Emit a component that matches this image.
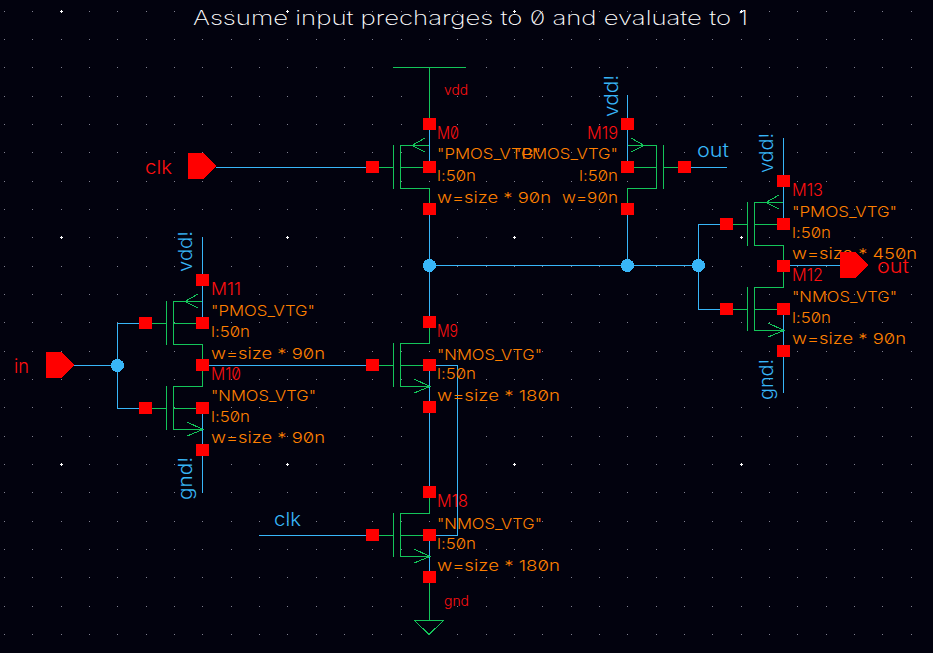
const BLUE = "#38b6f8";
const GREEN = "#14c45a";
const RED = "#ff0000";

type LabelProps = {
  x: number;
  y: number;
  w: number;
  text: string;
  className: string;
};

const PROP = "fill-[#ff8000] text-[15px]";
const INST = "fill-[#ff1010] text-[17px]";
const PIN_RED = "fill-[#ff1010] text-[19px]";
const NET_BLUE = "fill-[#38b6f8] text-[19px]";
const NET_RED = "fill-[#ff1010] text-[14px]";

function Label({ x, y, w, text, className }: LabelProps) {
  return (
    <text x={x} y={y} textLength={w} lengthAdjust="spacingAndGlyphs" className={className}>
      {text}
    </text>
  );
}

// rotated net labels read bottom to top
function Vertical({ x, y, w, text }: { x: number; y: number; w: number; text: string }) {
  return (
    <text
      transform={`translate(${x} ${y}) rotate(-90)`}
      textLength={w}
      lengthAdjust="spacingAndGlyphs"
      className="fill-[#38b6f8] text-[19px]"
    >
      {text}
    </text>
  );
}

function Wire({ d, color = BLUE }: { d: string; color?: string }) {
  return <path d={d} fill="none" stroke={color} strokeWidth={1} />;
}

function Pad({ x, y }: { x: number; y: number }) {
  return <rect x={x - 6} y={y - 6} width={13} height={12} fill={RED} />;
}

function Junction({ x, y }: { x: number; y: number }) {
  return <circle cx={x + 0.5} cy={y + 0.5} r={6.5} fill={BLUE} />;
}

// gate pin, tip points to the right
function Pin({ x, y }: { x: number; y: number }) {
  return (
    <polygon
      points={`${x},${y - 13} ${x + 15},${y - 13} ${x + 28},${y} ${x + 15},${y + 13} ${x},${y + 13}`}
      fill={RED}
    />
  );
}

type MosProps = { sx: number; my: number; kind: "p" | "n"; dir?: number };

function MosWires({ sx, my, kind, dir = -1 }: MosProps) {
  const cx = sx + 29 * dir;
  const gx = sx + 36 * dir;
  const top = my - 22;
  const bot = my + 21;
  return (
    <g>
      <Wire color={GREEN} d={`M${gx + 0.5} ${top}V${bot + 1}M${cx + 0.5} ${top}V${bot + 1}`} />
      <Wire color={GREEN} d={`M${sx + 51 * dir} ${my + 0.5}H${gx}M${cx} ${my + 0.5}H${sx}`} />
      <Wire color={GREEN} d={`M${cx} ${top + 0.5}H${sx + 1}M${cx} ${bot + 0.5}H${sx + 1}`} />
      {kind === "p" ? (
        <>
          <Wire d={`M${sx + 0.5} ${my - 43}V${my}`} />
          <Wire color={GREEN} d={`M${sx + 0.5} ${bot}V${my + 37}`} />
          <Wire
            color={GREEN}
            d={`M${sx + 4 * dir} ${top - 7}L${sx + 17 * dir} ${top + 0.5}L${sx + 4 * dir} ${top + 7}`}
          />
        </>
      ) : (
        <>
          <Wire color={GREEN} d={`M${sx + 0.5} ${my - 37}V${top}`} />
          <Wire d={`M${sx + 0.5} ${my}V${my + 43}`} />
          <Wire
            color={GREEN}
            d={`M${sx + 15 * dir} ${bot - 7}L${sx + 1} ${bot + 0.5}L${sx + 15 * dir} ${bot + 7}`}
          />
        </>
      )}
    </g>
  );
}

function MosPads({ sx, my, dir = -1 }: { sx: number; my: number; dir?: number }) {
  return (
    <g>
      <Pad x={sx} y={my - 43} />
      <Pad x={sx} y={my} />
      <Pad x={sx} y={my + 42} />
      <Pad x={sx + 57 * dir} y={my} />
    </g>
  );
}

const devices: MosProps[] = [
  { sx: 429, my: 167, kind: "p" },
  { sx: 627, my: 167, kind: "p", dir: 1 },
  { sx: 429, my: 365, kind: "n" },
  { sx: 429, my: 535, kind: "n" },
  { sx: 202, my: 323, kind: "p" },
  { sx: 202, my: 408, kind: "n" },
  { sx: 783, my: 224, kind: "p" },
  { sx: 783, my: 309, kind: "n" },
];

const labels: LabelProps[] = [
  { x: 444, y: 95, w: 24, text: "vdd", className: NET_RED },
  { x: 444, y: 606, w: 25, text: "gnd", className: NET_RED },
  { x: 14, y: 373, w: 15, text: "in", className: PIN_RED },
  { x: 145, y: 174, w: 27, text: "clk", className: PIN_RED },
  { x: 274, y: 526, w: 27, text: "clk", className: NET_BLUE },
  { x: 697, y: 157, w: 32, text: "out", className: NET_BLUE },
  { x: 877, y: 273, w: 32, text: "out", className: PIN_RED },

  { x: 437, y: 139, w: 22, text: "M0", className: INST },
  { x: 437, y: 159, w: 104, text: '"PMOS_VTG"', className: PROP },
  { x: 437, y: 181, w: 39, text: "l:50n", className: PROP },
  { x: 437, y: 203, w: 114, text: "w=size * 90n", className: PROP },

  { x: 587, y: 139, w: 31, text: "M19", className: INST },
  { x: 514, y: 159, w: 104, text: '"PMOS_VTG"', className: PROP },
  { x: 579, y: 181, w: 39, text: "l:50n", className: PROP },
  { x: 562, y: 203, w: 56, text: "w=90n", className: PROP },

  { x: 437, y: 337, w: 21, text: "M9", className: INST },
  { x: 437, y: 360, w: 105, text: '"NMOS_VTG"', className: PROP },
  { x: 437, y: 379, w: 39, text: "l:50n", className: PROP },
  { x: 437, y: 401, w: 123, text: "w=size * 180n", className: PROP },

  { x: 437, y: 507, w: 31, text: "M18", className: INST },
  { x: 437, y: 529, w: 105, text: '"NMOS_VTG"', className: PROP },
  { x: 437, y: 549, w: 39, text: "l:50n", className: PROP },
  { x: 437, y: 571, w: 123, text: "w=size * 180n", className: PROP },

  { x: 211, y: 295, w: 30, text: "M11", className: INST },
  { x: 211, y: 316, w: 104, text: '"PMOS_VTG"', className: PROP },
  { x: 211, y: 337, w: 39, text: "l:50n", className: PROP },
  { x: 211, y: 359, w: 114, text: "w=size * 90n", className: PROP },

  { x: 211, y: 380, w: 30, text: "M10", className: INST },
  { x: 211, y: 401, w: 105, text: '"NMOS_VTG"', className: PROP },
  { x: 211, y: 422, w: 39, text: "l:50n", className: PROP },
  { x: 211, y: 443, w: 114, text: "w=size * 90n", className: PROP },

  { x: 792, y: 196, w: 31, text: "M13", className: INST },
  { x: 792, y: 217, w: 105, text: '"PMOS_VTG"', className: PROP },
  { x: 792, y: 238, w: 39, text: "l:50n", className: PROP },
  { x: 792, y: 259, w: 125, text: "w=size * 450n", className: PROP },

  { x: 792, y: 281, w: 31, text: "M12", className: INST },
  { x: 792, y: 302, w: 105, text: '"NMOS_VTG"', className: PROP },
  { x: 792, y: 323, w: 39, text: "l:50n", className: PROP },
  { x: 792, y: 344, w: 114, text: "w=size * 90n", className: PROP },
];

const columns = Array.from({ length: 33 }, (_, i) => i);
const rows = Array.from({ length: 23 }, (_, i) => i);

function Grid() {
  return (
    <g>
      {rows.map((r) =>
        columns.map((c) => {
          const x = Math.round(4 + c * 28.33);
          const y = Math.round(10.67 + r * 28.33);
          const major = c % 8 === 2 && r % 8 === 0;
          return major ? (
            <path key={`${r}-${c}`} d={`M${x - 1} ${y + 0.5}H${x + 2}M${x + 0.5} ${y - 1}V${y + 2}`} stroke="#ffffff" />
          ) : (
            <rect key={`${r}-${c}`} x={x} y={y} width={1} height={1} fill="#808090" />
          );
        }),
      )}
    </g>
  );
}

export default function App() {
  return (
    <div className="h-[653px] w-[933px] overflow-hidden bg-[#02020e]">
      <svg
        width={933}
        height={653}
        className="block font-['Inter'] font-light slashed-zero"
        shapeRendering="crispEdges"
      >
        <Grid />

        <Wire color={GREEN} d="M393 67.5H466M429.5 67V119" />
        <Wire color={GREEN} d="M429.5 583V620" />
        <polygon points="414.5,620.5 443.5,620.5 429,634.5" fill="none" stroke={GREEN} />

        {devices.map((d) => (
          <MosWires key={`${d.sx}-${d.my}`} {...d} />
        ))}

        {/* nets */}
        <Wire d="M216 167.5H367" />
        <Wire d="M429.5 215V317M429 265.5H698M627.5 215V265" />
        <Wire d="M627.5 95V124M684 167.5H727" />
        <Wire d="M698.5 224V310M698 224.5H721M698 309.5H721" />
        <Wire d="M783.5 138V181M783.5 345V393" />
        <Wire d="M789 265.5H840" />
        <Wire d="M202.5 237V280M202.5 445V493" />
        <Wire d="M208 365.5H367" />
        <Wire d="M74 365.5H118M117.5 323V409M117 323.5H139M117 408.5H139" />
        <Wire d="M259 535.5H367" />
        <Wire d="M429.5 413V487" />
        <Wire d="M435 365.5H457.5V535.5H435" />

        <text
          x={193}
          y={25}
          textLength={555}
          lengthAdjust="spacingAndGlyphs"
          className="fill-white text-[20px] font-extralight"
        >
          Assume input precharges to 0 and evaluate to 1
        </text>

        {labels.map((l) => (
          <Label key={`${l.x}-${l.y}`} {...l} />
        ))}

        <Vertical x={618} y={117} w={42} text="vdd!" />
        <Vertical x={192} y={272} w={41} text="vdd!" />
        <Vertical x={773} y={173} w={40} text="vdd!" />
        <Vertical x={192} y={500} w={43} text="gnd!" />
        <Vertical x={773} y={400} w={41} text="gnd!" />

        {devices.map((d) => (
          <MosPads key={`${d.sx}-${d.my}`} sx={d.sx} my={d.my} dir={d.dir} />
        ))}

        <Junction x={429} y={265} />
        <Junction x={627} y={265} />
        <Junction x={698} y={265} />
        <Junction x={117} y={365} />

        <Pin x={46} y={365} />
        <Pin x={188} y={166} />
        <Pin x={840} y={265} />
      </svg>
    </div>
  );
}
